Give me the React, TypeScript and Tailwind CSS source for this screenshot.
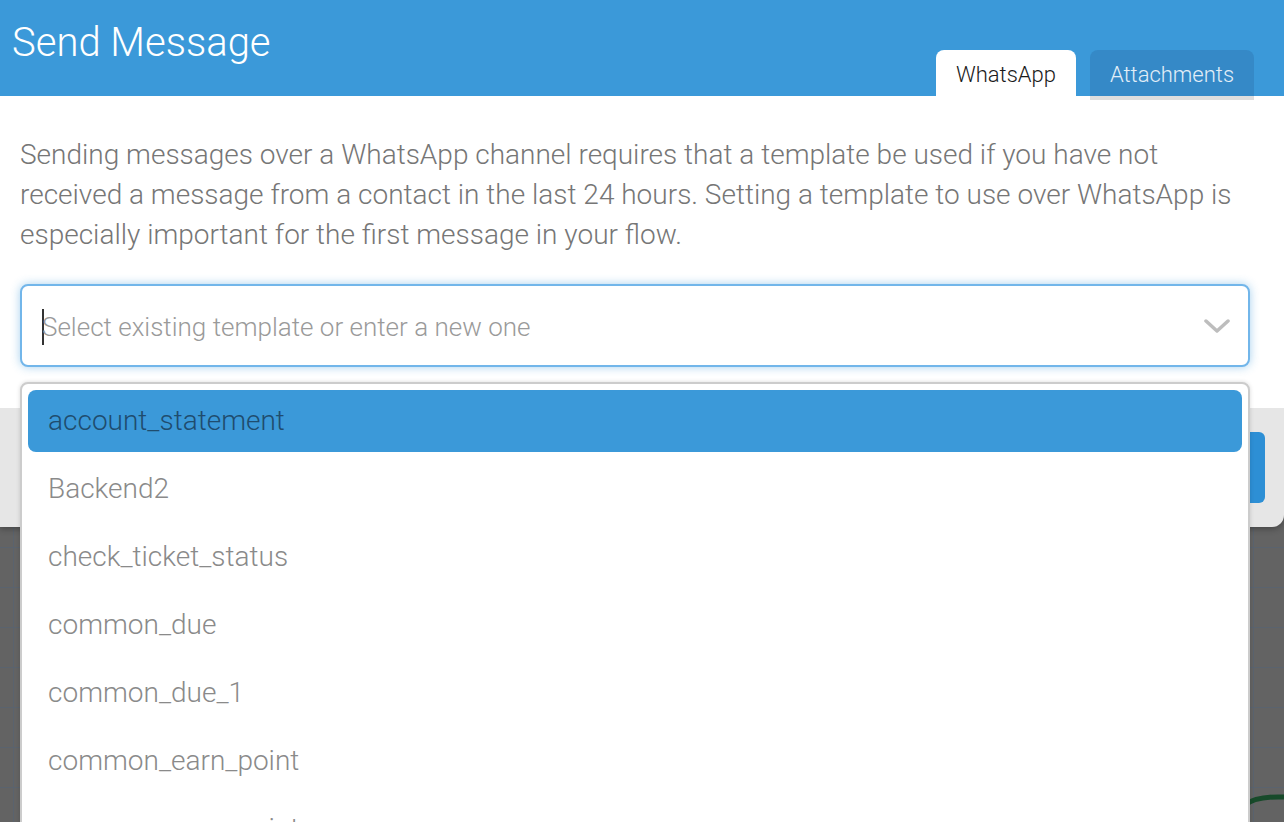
import React from "react";

const items = [
  "account_statement",
  "Backend2",
  "check_ticket_status",
  "common_due",
  "common_due_1",
  "common_earn_point",
  "common_earn_points",
];

export default function App() {
  return (
    <div
      className="relative w-[1284px] h-[822px] overflow-hidden bg-[#636363] bg-[linear-gradient(to_right,#5a636e_1px,transparent_1px),linear-gradient(to_bottom,#5a636e_1px,transparent_1px)] bg-[size:40px_40px] bg-[position:13px_27px]"
      style={{ fontFamily: "Roboto, 'Noto Sans', sans-serif" }}
    >
      {/* green connector curve */}
      <svg className="absolute right-0 bottom-0" width="40" height="30" viewBox="0 0 40 30">
        <path d="M0 14 Q10 4 40 5" stroke="#174a2a" strokeWidth="5" fill="none" />
      </svg>

      {/* modal */}
      <div className="relative w-[1284px] rounded-br-[12px] overflow-hidden shadow-[0_2px_6px_rgba(0,0,0,0.3)]">
        {/* header */}
        <div className="h-[96px] bg-[#3b99d9] flex items-start justify-between">
          <div className="pl-[12px] pt-[18px] text-[40px] leading-[50px] font-light text-white">Send Message</div>
          <div className="flex items-end gap-[14px] h-full pr-[30px]">
            <div className="h-[46px] w-[140px] bg-white rounded-t-[8px] flex items-center justify-center pt-[2px] text-[22px] font-light text-[#1a1a1a]">
              WhatsApp
            </div>
            <div className="h-[46px] w-[164px] bg-[#3589c7] rounded-t-[8px] flex items-center justify-center pt-[2px] text-[22px] font-light text-[#e2eef8]">
              Attachments
            </div>
          </div>
        </div>

        {/* body */}
        <div className="relative h-[312px] bg-white">
          <div className="absolute right-[30px] top-0 w-[164px] h-[4px] bg-[#dedede]" />
          <p className="pl-[20px] pr-[20px] pt-[39px] text-[28px] leading-[40px] font-light text-[#767676]">
            Sending messages over a WhatsApp channel requires that a template be used if you have not received a
            message from a contact in the last 24 hours. Setting a template to use over WhatsApp is especially
            important for the first message in your flow.
          </p>
          <div className="mt-[29px] ml-[20px] w-[1230px] h-[83px] rounded-[8px] border-2 border-[#72b6ea] shadow-[0_0_10px_rgba(59,153,217,0.45)] flex items-center pl-[20px] pr-[18px] bg-white">
            <span className="w-[2px] h-[36px] bg-[#333] -mr-[2px] mt-[2px]" />
            <span className="text-[26px] font-light text-[#9a9a9a] pt-[3px]">Select existing template or enter a new one</span>
            <svg className="ml-auto" width="26" height="16" viewBox="0 0 26 16">
              <path d="M2 3 L13 13 L24 3" stroke="#bdbdbd" strokeWidth="3.5" fill="none" strokeLinecap="round" strokeLinejoin="round" />
            </svg>
          </div>
        </div>

        {/* footer */}
        <div className="h-[119px] bg-[#e6e6e6] flex justify-end items-start pt-[24px] pr-[19px]">
          <div className="w-[160px] h-[71px] rounded-[6px] bg-[#2d8fd5]" />
        </div>
      </div>

      {/* dropdown menu */}
      <div className="absolute left-[20px] top-[382px] w-[1230px] h-[460px] bg-white border-2 border-[#cccccc] rounded-t-[8px] p-[6px] flex flex-col gap-[6px] shadow-[0_0_4px_rgba(0,0,0,0.15)]">
        {items.map((it, i) => (
          <div
            key={it}
            className={
              i === 0
                ? "h-[62px] shrink-0 rounded-[8px] bg-[#3b99d9] flex items-center pl-[20px] text-[28px] font-light text-[#1f4c6e]"
                : "h-[62px] shrink-0 flex items-center pl-[20px] text-[28px] font-light text-[#8a8a8a]"
            }
          >
            {it}
          </div>
        ))}
      </div>
    </div>
  );
}
